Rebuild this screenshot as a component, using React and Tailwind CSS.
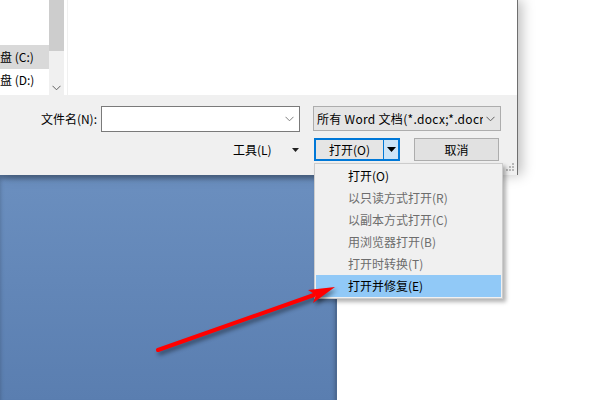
const font = { fontFamily: '"Noto Sans CJK SC", "Liberation Sans", sans-serif' };

function Chevron({ className }) {
  return (
    <svg width="9" height="6" viewBox="0 0 9 6" className={className}>
      <path d="M0.5 0.8 L4.5 4.8 L8.5 0.8" fill="none" stroke="currentColor" strokeWidth="1" />
    </svg>
  );
}

function Tri({ w, h, className }) {
  return (
    <svg width={w} height={h} viewBox={`0 0 ${w} ${h}`} className={className}>
      <polygon points={`0,0 ${w},0 ${w / 2},${h}`} fill="currentColor" />
    </svg>
  );
}

function OpenMenu() {
  const items = [
    { label: '打开(O)', on: true },
    { label: '以只读方式打开(R)' },
    { label: '以副本方式打开(C)' },
    { label: '用浏览器打开(B)' },
    { label: '打开时转换(T)' },
    { label: '打开并修复(E)', on: true, hot: true },
  ];
  return (
    <div className="absolute z-20 left-[314px] top-[163px] w-[189px] bg-[#f0f0f0] border border-[#cccccc] py-[1px] px-[1px] shadow-[3px_3px_4px_rgba(0,0,0,0.3)]">
      {items.map((it) => (
        <div key={it.label}
          className={`h-[22px] flex items-center pl-[32px] text-[12px] ${it.hot ? 'bg-[#91c9f7]' : ''} ${it.on ? 'text-black' : 'text-[#6d6d6d]'}`}>
          {it.label}
        </div>
      ))}
    </div>
  );
}

export default function App() {
  return (
    <div className="relative w-[600px] h-[400px] overflow-hidden bg-white" style={font}>
      {/* file dialog */}
      <div className="w-[518px] h-[175px] bg-white border-r border-[#6f6f6f] shadow-[4px_0_12px_rgba(0,0,0,0.25)] flex flex-col relative z-10">
        <div className="h-[95px] flex">
          <div className="w-[49px] flex flex-col text-[12px] text-black pt-[45px]">
            <div className="h-[24px] bg-[#d9d9d9] flex items-center whitespace-nowrap overflow-hidden">盘 (C:)</div>
            <div className="h-[22px] flex items-center whitespace-nowrap overflow-hidden">盘 (D:)</div>
          </div>
          <div className="w-[15px] bg-[#f0f0f0] flex flex-col">
            <div className="h-[51px] bg-[#cdcdcd]" />
            <div className="flex-1 flex items-end justify-center pb-[4px]">
              <Chevron className="text-[#606060]" />
            </div>
          </div>
          <div className="w-[3px] bg-white" />
          <div className="w-[1px] bg-[#f0f0f0]" />
          <div className="flex-1 bg-white" />
        </div>

        <div className="flex-1 bg-[#f0f0f0] relative">
          <div className="flex items-start mt-[11px] text-[12px] text-black">
            <div className="w-[97px] h-[26px] flex items-center justify-end">文件名(N):</div>
            <div className="ml-[4px] w-[199px] h-[26px] bg-white border border-[#7a7a7a] flex items-center justify-end pr-[5px]">
              <Chevron className="text-[#808080]" />
            </div>
            <div className="ml-[13px] w-[188px] h-[25px] bg-[#e5e5e5] border border-[#adadad] flex items-center pl-[3px] pr-[5px]">
              <span className="flex-1 whitespace-nowrap overflow-hidden tracking-[0.3px]">所有 Word 文档(*.docx;*.docm)</span>
              <Chevron className="ml-[3px] text-[#606060]" />
            </div>
          </div>

          <div className="flex items-center mt-[6px] text-[12px] text-black h-[23px]">
            <div className="ml-[233px] w-[40px]">工具(L)</div>
            <Tri w={7} h={4} className="ml-[19px] text-[#202020]" />
            <div className="ml-[15px] w-[86px] h-[23px] flex border-2 border-[#0078d7] bg-[#e5e5e5]">
              <div className="w-[67px] flex items-center justify-center">打开(O)</div>
              <div className="w-[1px] bg-[#0078d7]" />
              <div className="flex-1 bg-[#cce4f7] flex items-center justify-center">
                <Tri w={9} h={5} className="text-black" />
              </div>
            </div>
            <div className="ml-[14px] w-[85px] h-[23px] bg-[#e1e1e1] border border-[#adadad] flex items-center justify-center">取消</div>
          </div>

          <svg className="absolute right-[2px] bottom-[3px]" width="9" height="9" viewBox="0 0 9 9">
            <rect x="6" y="0" width="2" height="2" fill="#b8b8b8" />
            <rect x="3" y="3" width="2" height="2" fill="#b8b8b8" />
            <rect x="6" y="3" width="2" height="2" fill="#b8b8b8" />
            <rect x="0" y="6" width="2" height="2" fill="#b8b8b8" />
            <rect x="3" y="6" width="2" height="2" fill="#b8b8b8" />
            <rect x="6" y="6" width="2" height="2" fill="#b8b8b8" />
          </svg>
        </div>
      </div>

      {/* word window behind */}
      <div className="w-[337px] h-[225px] bg-gradient-to-b from-[#6b8fbf] to-[#5a7eb0] border-r-2 border-[#4d6a92] shadow-[inset_0_4px_4px_rgba(0,0,0,0.25)]" />

      <OpenMenu />

      <svg className="absolute left-0 top-0 pointer-events-none z-30 drop-shadow-[2px_3px_2px_rgba(0,0,0,0.45)]" width="600" height="400">
        <line x1="158" y1="350" x2="314" y2="295" stroke="#ff0000" strokeWidth="4" strokeLinecap="round" />
        <polygon points="335,287 313,303 316,295 308,290" fill="#ff0000" />
      </svg>
    </div>
  );
}
